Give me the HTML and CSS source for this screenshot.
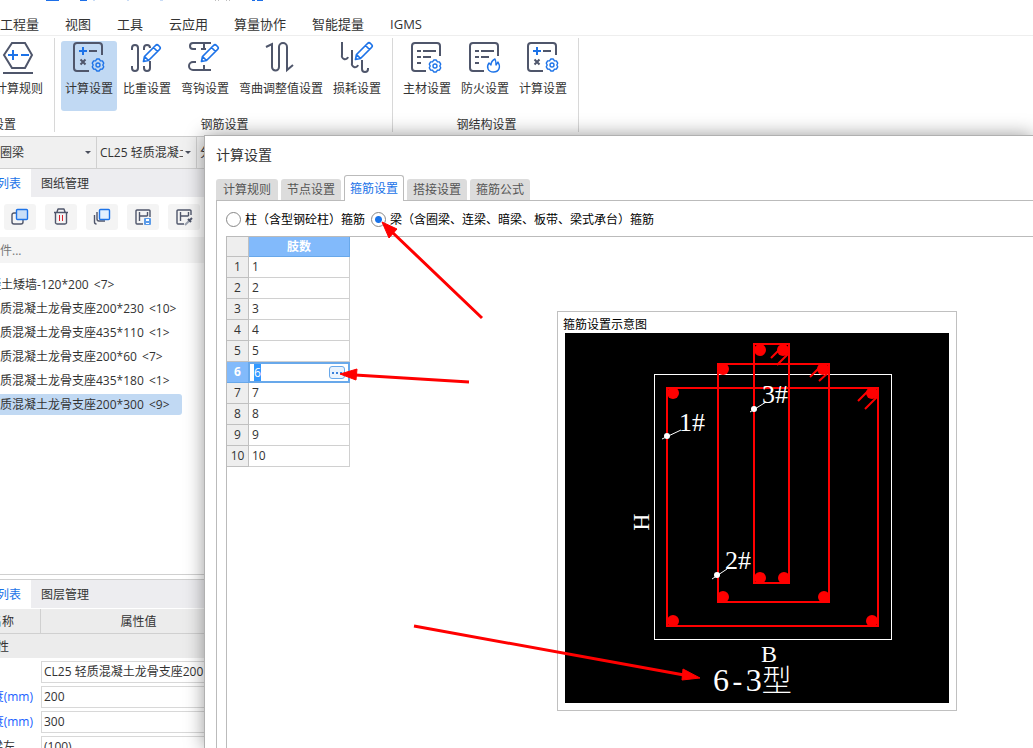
FILE: index.html
```html
<!DOCTYPE html>
<html lang="zh-CN">
<head>
    <meta charset="UTF-8">
    <meta name="viewport" content="width=device-width, initial-scale=1.0">
    <title>计算设置</title>
    <link rel="stylesheet" href="styles.css">
</head>
<body>

<!-- shared icon parts -->
<svg class="symbols" aria-hidden="true">
    <symbol id="gear" viewBox="-8 -8 16 16">
        <path class="blue thin" d="M5.7 1.8 4.4 4.1 2.4 4.2 1.3 6h-2.6L-2.4 4.2-4.4 4.1-5.7 1.8-4.8 0-5.7-1.8-4.4-4.1-2.4-4.2-1.3-6h2.6L2.4-4.2 4.4-4.1 5.7-1.8 4.8 0z"/>
        <circle class="blue thin" r="2"/>
    </symbol>
    <symbol id="pencil" viewBox="0 0 20 20">
        <path class="blue pen" d="M1.500 18.500l1-5L13.500 2.500q1.500-1.500 3 0l1 1q1.500 1.500 0 3L6.500 17.500zM11.500 4.500l4 4M2.500 13.500l4 4"/>
    </symbol>
    <symbol id="calc" viewBox="0 0 32 32">
        <path class="dark" d="M29 14V5a3 3 0 0 0-3-3H4a3 3 0 0 0-3 3v22a3 3 0 0 0 3 3h12M16 10h8M7.500 18.500l5 5M12.500 18.500l-5 5"/>
        <path class="blue" d="M10 6v8M6 10h8"/>
        <use href="#gear" x="17" y="16" width="16" height="16"/>
    </symbol>
</svg>

<header class="ribbon">
    <svg class="quick-access" aria-hidden="true">
        <path fill="#1d6fe8" d="M46 0h13v1H46zM80 0h7v1h-7zM252 0h3v1h-3zM257 0h6v1h-6z"/>
        <path fill="#c9dcf6" d="M93 0h2v1h-2zM127 0h2v1h-2zM160 0h3v1h-3z"/>
        <path fill="#c0c0c0" d="M215 0h1v1h-1zM218 0h1v1h-1zM226 0h1v1h-1zM229 0h1v1h-1z"/>
    </svg>
    <nav class="menu">
        <a href="#">工程量</a>
        <a href="#">视图</a>
        <a href="#">工具</a>
        <a href="#">云应用</a>
        <a href="#">算量协作</a>
        <a href="#">智能提量</a>
        <a href="#">IGMS</a>
    </nav>
    <div class="groups">
        <section class="group group-cut">
            <div class="tools">
                <button class="tool">
                    <svg viewBox="0 0 32 32"><path class="dark" d="M9 2h13l7 12-7 13H9L1 14zM0 32h30"/><path class="blue" d="M10 9v10M5 14h10M18 14h8"/></svg>
                    计算规则
                </button>
            </div>
            <h2>设置</h2>
        </section>
        <section class="group">
            <div class="tools">
                <button class="tool active">
                    <svg><use href="#calc"/></svg>
                    计算设置
                </button>
                <button class="tool">
                    <svg viewBox="0 0 32 32"><path class="dark" d="M1 9V7a3 3 0 0 1 6 0v20a3 3 0 0 1-6 0v-2M13 9V7a3 3 0 0 1 6 0M19 20v7a3 3 0 0 1-6 0v-2"/><use href="#pencil" x="11" y="2" width="20" height="20"/></svg>
                    比重设置
                </button>
                <button class="tool">
                    <svg viewBox="0 0 32 32"><path class="dark" d="M22 2H4a3 3 0 0 0 0 6h3M15 2v7M12 8h5M7 21H4a4 4 0 0 0 0 8h18M15 24v5"/><use href="#pencil" x="11" y="2" width="20" height="20"/></svg>
                    弯钩设置
                </button>
                <button class="tool">
                    <svg viewBox="0 0 32 32"><path class="dark" d="M1 6l6-3v23a3 3 0 0 0 7 0V6a4 4 0 0 1 8 0v23l6-5"/></svg>
                    弯曲调整值设置
                </button>
                <button class="tool">
                    <svg viewBox="0 0 32 32"><path class="dark" d="M1 1v13a3 3 0 0 0 6 2M11 9v13a3 3 0 0 0 6 2M21 19v9a3 3 0 0 0 6 0v-1"/><use href="#pencil" x="13" y="0" width="20" height="20"/></svg>
                    损耗设置
                </button>
            </div>
            <h2>钢筋设置</h2>
        </section>
        <section class="group">
            <div class="tools">
                <button class="tool">
                    <svg viewBox="0 0 32 32"><path class="dark" d="M29 15V5a3 3 0 0 0-3-3H4a3 3 0 0 0-3 3v22a3 3 0 0 0 3 3h11M6 10h4M12 10h13M6 16h4M12 16h8M6 22h4"/><use href="#gear" x="16" y="17" width="16" height="16"/></svg>
                    主材设置
                </button>
                <button class="tool">
                    <svg viewBox="0 0 32 32"><path class="dark" d="M29 15V5a3 3 0 0 0-3-3H4a3 3 0 0 0-3 3v22a3 3 0 0 0 3 3h11M6 10h4M12 10h13M6 16h4M12 16h8M6 22h4"/><path class="blue thin" d="M26 18c-4 2-4 4-4 6l-2-2c-3 4-1 9 4.500 9s7.500-5 4.500-10l-2 3c0-2 0-4-1-6z"/></svg>
                    防火设置
                </button>
                <button class="tool">
                    <svg><use href="#calc"/></svg>
                    计算设置
                </button>
            </div>
            <h2>钢结构设置</h2>
        </section>
    </div>
</header>

<div class="selector-bar">
    <div class="selector"><select aria-label="构件类型"><option>圈梁</option></select></div>
    <div class="selector"><select aria-label="构件"><option>CL25 轻质混凝土龙骨支座</option></select></div>
    <div class="selector"><select aria-label="分层"><option>分层</option></select></div>
</div>

<aside class="sidebar">
    <nav class="side-tabs">
        <a class="active" href="#">列表</a>
        <a href="#">图纸管理</a>
    </nav>
    <div class="side-tools">
        <button aria-label="新建"><svg viewBox="0 0 18 18"><path class="dark thin" d="M5 5H3a2 2 0 0 0-2 2v7a2 2 0 0 0 2 2h7a2 2 0 0 0 2-2v-2"/><rect class="blue thin fill-mid" x="5.500" y="1.500" width="11" height="10" rx="1"/></svg></button>
        <button aria-label="删除"><svg viewBox="0 0 18 18"><path class="dark thin" d="M2 4.500h14M5 4l1-3h6l1 3M3.500 5v10a2 2 0 0 0 2 1h7a2 2 0 0 0 2-1V5"/><path d="M7.500 7v6M10.500 7v6" stroke="#d9232e"/></svg></button>
        <button aria-label="复制"><svg viewBox="0 0 18 18"><path class="dark thin" d="M1.500 7v7a2 2 0 0 0 2 2M4 4v7a2 2 0 0 0 2 2h6"/><rect class="blue thin fill-light" x="6.500" y="1.500" width="10" height="10" rx="1"/></svg></button>
        <button aria-label="保存"><svg viewBox="0 0 18 18"><path class="dark thin" d="M16 9V3a1 1 0 0 0-1-1H3a1 1 0 0 0-1 1v12a1 1 0 0 0 1 1h6M5.500 4v9M5.500 8h8M13.500 4v4"/><rect x="10" y="10" width="7" height="7" rx="1" fill="#5b9be8"/><path d="M12 11h3v2h-3zM12 15h3v1h-3z" fill="#fff"/></svg></button>
        <button aria-label="提取"><svg viewBox="0 0 18 18"><path class="dark thin" d="M16 7V3a1 1 0 0 0-1-1H3a1 1 0 0 0-1 1v12a1 1 0 0 0 1 1h6M5.500 4v9M5.500 8h8M13.500 4v4"/><path d="M10 17l5-5" stroke="#9aa1ae" stroke-width="2"/><path d="M13 11l3 3M14 13l3-3" stroke="#4f566b" stroke-width="2"/></svg></button>
    </div>
    <input class="search" type="text" placeholder="件..." aria-label="搜索构件">
    <ul class="members">
        <li class="cut">凝土矮墙-120*200 <span>&lt;7&gt;</span></li>
        <li>质混凝土龙骨支座200*230 <span>&lt;10&gt;</span></li>
        <li>质混凝土龙骨支座435*110 <span>&lt;1&gt;</span></li>
        <li>质混凝土龙骨支座200*60 <span>&lt;7&gt;</span></li>
        <li>质混凝土龙骨支座435*180 <span>&lt;1&gt;</span></li>
        <li class="selected">质混凝土龙骨支座200*300 <span>&lt;9&gt;</span></li>
    </ul>

    <section class="properties">
        <nav class="side-tabs">
            <a class="active" href="#">列表</a>
            <a href="#">图层管理</a>
        </nav>
        <div class="prop-head"><span>名称</span><span>属性值</span></div>
        <div class="prop-group"><span>性</span></div>
        <div class="prop"><label for="p-name"></label><input id="p-name" aria-label="名称" value="CL25 轻质混凝土龙骨支座200"></div>
        <div class="prop link"><label for="p-width">度(mm)</label><input id="p-width" value="200"></div>
        <div class="prop link"><label for="p-height">度(mm)</label><input id="p-height" value="300"></div>
        <div class="prop short"><label for="p-axis">梁左</label><input id="p-axis" value="(100)"></div>
    </section>
</aside>

<main class="dialog">
    <h1>计算设置</h1>
    <nav class="tabs">
        <a href="#">计算规则</a>
        <a href="#">节点设置</a>
        <a class="active" href="#">箍筋设置</a>
        <a href="#">搭接设置</a>
        <a href="#">箍筋公式</a>
    </nav>
    <div class="panel">
        <div class="radios">
            <label><input type="radio" name="kind">柱（含型钢砼柱）箍筋</label>
            <label><input type="radio" name="kind" checked>梁（含圈梁、连梁、暗梁、板带、梁式承台）箍筋</label>
        </div>
        <div class="content">
            <table class="legs">
                <thead>
                    <tr><th></th><th>肢数</th></tr>
                </thead>
                <tbody>
                    <tr><th>1</th><td>1</td></tr>
                    <tr><th>2</th><td>2</td></tr>
                    <tr><th>3</th><td>3</td></tr>
                    <tr><th>4</th><td>4</td></tr>
                    <tr><th>5</th><td>5</td></tr>
                    <tr class="editing">
                        <th>6</th>
                        <td><div class="editor"><input id="legs" type="text" value="6" aria-label="肢数"><button aria-label="选择"><i></i><i></i><i></i></button></div></td>
                    </tr>
                    <tr><th>7</th><td>7</td></tr>
                    <tr><th>8</th><td>8</td></tr>
                    <tr><th>9</th><td>9</td></tr>
                    <tr><th>10</th><td>10</td></tr>
                </tbody>
            </table>
            <figure class="diagram">
                <figcaption>箍筋设置示意图</figcaption>
                <svg viewBox="0 0 384 370">
                    <rect width="384" height="370"/>
                    <rect class="section" x="89.500" y="41.500" width="237" height="265"/>
                    <g class="stirrup">
                        <rect x="102" y="55" width="211" height="238"/>
                        <rect x="153" y="31" width="111" height="238"/>
                        <rect x="189" y="11" width="35" height="239"/>
                        <path d="M293 68l13-13M300 76l13-13M245 44l12-12M254 48l10-9M206 25l12-12M212 32l12-12"/>
                    </g>
                    <g class="bars">
                        <circle cx="108" cy="60" r="6"/>
                        <circle cx="307" cy="60" r="6"/>
                        <circle cx="108" cy="288" r="6"/>
                        <circle cx="307" cy="288" r="6"/>
                        <circle cx="158" cy="36" r="6"/>
                        <circle cx="258" cy="36" r="6"/>
                        <circle cx="158" cy="264" r="6"/>
                        <circle cx="259" cy="264" r="6"/>
                        <circle cx="195" cy="17" r="6"/>
                        <circle cx="218" cy="17" r="6"/>
                        <circle cx="195" cy="245" r="6"/>
                        <circle cx="219" cy="245" r="6"/>
                    </g>
                    <path class="leader" d="M97 106l19-9M147 246l15-10M185 79l16-10"/>
                    <g class="marks">
                        <circle cx="102" cy="103" r="3"/>
                        <circle cx="152" cy="242" r="3"/>
                        <circle cx="189" cy="76" r="3"/>
                        <text x="114" y="98">1#</text>
                        <text x="197" y="70">3#</text>
                        <text x="160" y="236">2#</text>
                        <text class="side" x="204" y="329">B</text>
                        <text class="side" transform="translate(84 189) rotate(-90)">H</text>
                        <text class="type" x="148" y="358">6<tspan class="dash">-</tspan>3<tspan class="han">型</tspan></text>
                    </g>
                </svg>
            </figure>
        </div>
    </div>
</main>

<!-- red pointers over the window -->
<svg class="pointers" aria-hidden="true">
    <path class="shaft" d="M482 318L392 232M469 382L355 375M414 626L684 675"/>
    <path class="head" d="M382 222l15 7-8 9zM340 374l17-5-1 11zM700 678l-17-9-1 11z"/>
</svg>

<script>
    document.getElementById("legs").select();
</script>

</body>
</html>
```
FILE: styles.css
```css
* {
    box-sizing: border-box;
}

body {
    margin: 0;
    height: 100vh;
    overflow: hidden;
    position: relative;
    display: flex;
    flex-direction: column;
    font-family: "Open Sans", "Noto Sans CJK SC", sans-serif;
    font-size: 12px;
    line-height: 16px;
    color: #333;
    background: #fff;
}

a {
    color: inherit;
    text-decoration: none;
}

button, input, select {
    font: inherit;
    color: inherit;
    border: 0;
    padding: 0;
    margin: 0;
    background: none;
}

h1, h2, ul, figure {
    margin: 0;
    padding: 0;
    font-weight: normal;
}

/* icons */
.symbols {
    position: absolute;
    width: 0;
    height: 0;
}

.dark, .blue {
    fill: none;
    stroke: #4f566b;
    stroke-width: 2;
}

.blue {
    stroke: #1d73e8;
}

.thin {
    stroke-width: 1.4;
    stroke-linejoin: round;
}

.pen {
    stroke-width: 1.7;
    stroke-linejoin: round;
}

.fill-mid {
    fill: #c9def7;
}

.fill-light {
    fill: #e3f0fe;
}

/* ribbon */
.quick-access {
    display: block;
    width: 100%;
    height: 1px;
}

.menu {
    display: flex;
    gap: 26px;
    height: 35px;
    padding-top: 13px;
    font-size: 13px;
    line-height: 20px;
    white-space: nowrap;
    border-bottom: 1px solid #eee;
}

.groups {
    display: flex;
    height: 100px;
    padding: 2px 0 4px;
}

.group {
    display: flex;
    flex-direction: column;
    justify-content: space-between;
    padding: 3px 7px 0 6px;
    border-right: 1px solid #d8d8d8;
}

.group-cut {
    width: 55px;
    align-items: flex-end;
    overflow: hidden;
}

.tools {
    display: flex;
    gap: 2px;
}

.tool {
    flex: none;
    display: flex;
    flex-direction: column;
    align-items: center;
    gap: 8px;
    height: 70px;
    padding: 0 4px;
    border-radius: 3px;
    white-space: nowrap;
}

.tool.active {
    background: #c1d9f3;
}

.tool svg {
    width: 32px;
    height: 32px;
    overflow: visible;
}

.group h2 {
    padding-left: 3px;
    font-size: 12px;
    line-height: 14px;
    text-align: center;
}

.group-cut h2 {
    padding-right: 31px;
    white-space: nowrap;
}

/* selector bar */
.selector-bar {
    display: flex;
    height: 33px;
    background: #f0f0f0;
    border-top: 1px solid #ccc;
    border-bottom: 1px solid #d0d0d0;
}

.selector {
    display: flex;
    align-items: center;
    width: 100px;
    padding: 0 5px 0 3px;
    border-right: 1px solid #d0d0d0;
}

.selector:first-child {
    width: 97px;
    padding-left: 0;
}

.selector select {
    flex: 1;
    min-width: 0;
    appearance: none;
    overflow: hidden;
}

.selector::after {
    content: "";
    margin-left: 2px;
    border: 3px solid transparent;
    border-top-color: #4a4f5c;
    border-bottom: 0;
}

/* left side */
.sidebar {
    flex: 1;
    min-height: 0;
    width: 230px;
    display: flex;
    flex-direction: column;
    overflow: hidden;
    white-space: nowrap;
}

.side-tabs {
    display: flex;
    height: 28px;
    line-height: 30px;
    background: #ededf0;
}

.side-tabs a {
    padding: 0 10px;
}

.side-tabs .active {
    display: flex;
    justify-content: flex-end;
    width: 31px;
    color: #1a73e8;
    background: #fff;
}

.side-tools {
    display: flex;
    gap: 9px;
    padding: 7px 4px;
}

.side-tools button {
    flex: none;
    display: flex;
    align-items: center;
    justify-content: center;
    width: 32px;
    height: 26px;
    border-radius: 3px;
    background: #f4f4f4;
}

.side-tools svg {
    width: 18px;
    height: 18px;
}

.search {
    height: 26px;
    background: #f4f4f4;
}

.search::placeholder {
    color: #777;
}

.members {
    padding-top: 11px;
    list-style: none;
}

.members li {
    width: 182px;
    height: 21px;
    margin-bottom: 3px;
    line-height: 21px;
    border-radius: 0 3px 3px 0;
}

.members span {
    margin-left: 2px;
}

.members .cut {
    text-indent: -11px;
}

.members .selected {
    background: #c1d9f3;
}

.properties {
    flex: none;
    height: 174px;
    margin-top: auto;
    padding-top: 4px;
    border-top: 1px solid #d0d0d0;
    overflow: hidden;
}

.properties .side-tabs {
    height: 29px;
    border-top: 1px solid #d0d0d0;
}

.prop-head {
    display: flex;
    height: 25px;
    margin-top: 1px;
    line-height: 26px;
    background: #ececec;
    border-bottom: 1px solid #d0d0d0;
}

.prop-head span {
    flex: none;
}

.prop-head span:first-child {
    display: flex;
    justify-content: flex-end;
    width: 41px;
    padding-right: 26px;
    border-right: 1px solid #d0d0d0;
}

.prop-head span:last-child {
    width: 195px;
    text-align: center;
}

.prop-group {
    height: 24px;
    margin-bottom: 3px;
    line-height: 26px;
    background: #ececec;
    text-indent: -3px;
}

.prop {
    display: flex;
    height: 22px;
    margin-bottom: 3px;
    line-height: 22px;
}

.prop label {
    flex: none;
    display: flex;
    justify-content: flex-end;
    width: 41px;
    padding-right: 8px;
}

.prop.link label {
    color: #1a5fff;
}

.prop.short label {
    padding-right: 26px;
}

.prop input {
    flex: 1;
    padding-left: 2px;
    border: 1px solid #d8d8d8;
}

/* dialog window */
.dialog {
    position: absolute;
    left: 204px;
    top: 135px;
    right: 0;
    bottom: 0;
    display: flex;
    flex-direction: column;
    padding: 9px 0 0 11px;
    background: #fff;
    border-top: 1px solid #b0b0b0;
    border-left: 1px solid #b0b0b0;
    box-shadow: 0 0 18px rgba(0, 0, 0, 0.4);
}

.dialog h1 {
    font-size: 14px;
    line-height: 20px;
}

.tabs {
    display: flex;
    align-items: flex-end;
    gap: 3px;
    margin-top: 10px;
}

.tabs a {
    height: 21px;
    padding: 0 6px;
    line-height: 22px;
    color: #555;
    background: #dcdcdc;
    border-radius: 3px 3px 0 0;
}

.tabs a:first-child {
    padding: 0 7px;
}

.tabs .active {
    height: 26px;
    padding: 0 5px;
    margin-bottom: -1px;
    line-height: 26px;
    color: #1a73e8;
    background: #fff;
    border: 1px solid #bbb;
    border-bottom: 0;
    position: relative;
}

.panel {
    flex: 1;
    display: flex;
    flex-direction: column;
    padding-left: 9px;
    border-top: 1px solid #bbb;
    border-left: 1px solid #bbb;
}

.radios {
    display: flex;
    gap: 6px;
    height: 35px;
    padding-top: 2px;
    color: #000;
}

.radios label {
    display: flex;
    align-items: center;
    gap: 4px;
}

.radios input {
    appearance: none;
    width: 15px;
    height: 15px;
    border: 1px solid #888;
    border-radius: 50%;
    background: #fff;
}

.radios input:checked {
    background: radial-gradient(circle, #1a73e8 3px, #fff 4px);
}

.content {
    flex: 1;
    display: flex;
    align-items: flex-start;
    border-top: 1px solid #bbb;
    border-left: 1px solid #bbb;
}

.legs {
    flex: none;
    width: 123px;
    table-layout: fixed;
    border-collapse: separate;
    border-spacing: 0;
}

.legs th, .legs td {
    height: 21px;
    padding: 0;
    line-height: 20px;
    border-right: 1px solid #d0d0d0;
    border-bottom: 1px solid #d0d0d0;
    vertical-align: bottom;
}

.legs th {
    width: 22px;
    font-weight: normal;
    background: #eee;
    border-color: #c0c0c0;
}

.legs td {
    padding-left: 3px;
}

.legs thead th {
    height: 20px;
    line-height: 19px;
}

.legs thead th:last-child {
    width: 101px;
    font-weight: bold;
    color: #fff;
    background: #82bafb;
    border-color: #68a8ea;
}

.legs .editing th {
    font-weight: bold;
    color: #fff;
    background: #82bafb;
    border-color: #68a8ea;
}

.legs .editing td {
    padding: 0;
    border: 0;
}

.editor {
    display: flex;
    align-items: center;
    height: 21px;
    padding: 0 3px;
    border: 2px solid #68a8ea;
    border-left-width: 1px;
}

.editor input {
    flex: 1;
    min-width: 0;
    height: 17px;
    padding-left: 1px;
    outline: 0;
}

.editor input::selection {
    color: #fff;
    background: #3399ff;
}

.editor button {
    display: flex;
    align-items: center;
    justify-content: center;
    gap: 2px;
    width: 16px;
    height: 13px;
    border: 1px solid #68a8ea;
    border-radius: 3px;
    background: #eaf3fd;
}

.editor i {
    width: 2px;
    height: 2px;
    background: #3b82dc;
}

.diagram {
    flex: none;
    width: 400px;
    margin: 74px 0 0 207px;
    padding: 5px 7px 7px;
    border: 1px solid #c0c0c0;
}

.diagram figcaption {
    height: 16px;
    margin-left: -2px;
    color: #000;
}

.diagram svg {
    display: block;
    width: 384px;
    height: 370px;
}

.section {
    fill: none;
    stroke: #fff;
}

.stirrup {
    fill: none;
    stroke: #f00;
    stroke-width: 2;
}

.bars {
    fill: #f00;
}

.leader {
    stroke: #fff;
}

.marks {
    fill: #fff;
    font-family: "Liberation Serif", serif;
    font-size: 26px;
}

.marks .side {
    font-size: 24px;
    text-anchor: middle;
}

.marks .type {
    font-size: 32px;
}

.marks .dash {
    font-family: "Liberation Mono", monospace;
    font-size: 28px;
}

.marks .han {
    font-family: "Noto Sans CJK SC", sans-serif;
    font-size: 30px;
    font-weight: 300;
}

/* pointers */
.pointers {
    position: absolute;
    left: 0;
    top: 0;
    width: 100%;
    height: 100%;
    pointer-events: none;
}

.shaft {
    stroke: #f00;
    stroke-width: 3;
}

.head {
    fill: #f00;
    stroke: #f00;
}
```
